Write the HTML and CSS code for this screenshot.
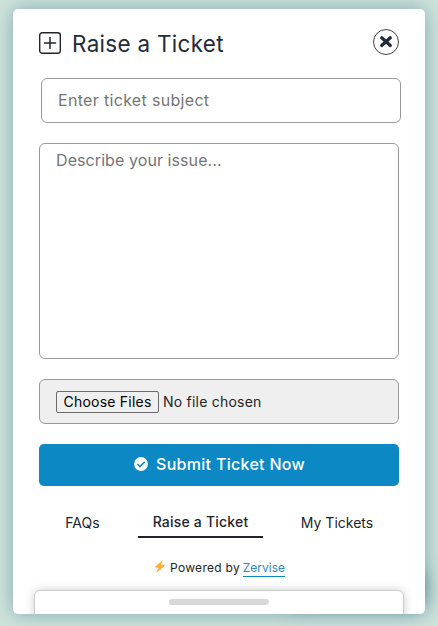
FILE: index.html
```html
<!DOCTYPE html>
<html lang="en">
<head>
<meta charset="utf-8">
<title>Raise a Ticket</title>
<link rel="stylesheet" href="styles.css">
</head>
<body>
<div class="launcher-shadow"></div>
<main class="card">
  <header class="header">
    <svg class="add-icon" viewBox="0 0 22 22" fill="none" stroke="#212529">
      <rect x=".7" y=".7" width="20.6" height="20.6" rx="2.6" stroke-width="1.4"/>
      <path d="M11 5.5v11M5.5 11h11" stroke-width="1.5" stroke-linecap="round"/>
    </svg>
    <h1 class="title">Raise a Ticket</h1>
    <button class="close" aria-label="Close">
      <svg viewBox="0 0 26 26" fill="none">
        <circle cx="13" cy="13" r="12.5" stroke="#444"/>
        <path d="M8.7 8.7l8.6 7.8M17.3 8.7l-8.6 7.8" stroke="#212b3a" stroke-width="3.2" stroke-linecap="round"/>
      </svg>
    </button>
  </header>
  <form class="form">
    <input class="field subject" type="text" placeholder="Enter ticket subject">
    <textarea class="field issue" placeholder="Describe your issue..."></textarea>
    <div class="field files">
      <button class="choose" type="button">Choose Files</button>
      <span class="chosen">No file chosen</span>
    </div>
    <button class="submit" type="button">
      <svg class="check" viewBox="0 0 14 14" fill="none">
        <circle cx="7" cy="7" r="6.9" fill="#fff"/>
        <path d="M3.4 7l2.6 2.6 4.8-4.8" stroke="#0c89c4" stroke-width="1.5"/>
      </svg>
      <span class="submit-label">Submit Ticket Now</span>
    </button>
  </form>
  <nav class="tabs">
    <a class="tab faqs">FAQs</a>
    <a class="tab active">Raise a Ticket</a>
    <a class="tab mine">My Tickets</a>
  </nav>
  <footer class="powered">
    <svg class="bolt" viewBox="0 0 12 13"><path d="M9 0L.4 7.2l4.2.9L2.2 12.8 11.4 5.4 7 4.6z" fill="#ffac33"/></svg>
    <span class="by">Powered by</span>
    <a class="brand">Zervise</a>
  </footer>
  <section class="sheet"><div class="handle"></div></section>
</main>
</body>
</html>
```
FILE: styles.css
```css
* { box-sizing: border-box; }
body {
  position: relative;
  margin: 0;
  width: 438px;
  height: 626px;
  padding: 9px 13px 12px;
  overflow: hidden;
  background: #cfe3dc;
  font-family: Inter, "Open Sans", sans-serif;
  color: #212529;
}
button, input, textarea { font: inherit; color: inherit; }
/* Shadow of the launcher button hidden behind the card's corner */
.launcher-shadow {
  position: absolute;
  right: 14px;
  bottom: 20px;
  width: 140px;
  height: 38px;
  border-radius: 14px;
  box-shadow: 0 0 18px rgba(55, 110, 128, .75);
}
.card {
  position: relative;
  height: 605px;
  display: flex;
  flex-direction: column;
  overflow: hidden;
  border-radius: 5px;
  background: #fff;
  box-shadow: 0 0 20px rgba(69, 123, 137, .55);
}
.header {
  flex: none;
  display: flex;
  align-items: center;
  height: 69px;
  padding: 0 26px 1px;
}
.add-icon { width: 22px; height: 22px; flex: none; }
.title {
  margin: 0 0 0 11px;
  font-size: 22.4px;
  line-height: 33px;
  font-weight: 400;
  letter-spacing: .34px;
  white-space: nowrap;
  color: #212b3a;
}
.close {
  width: 26px;
  height: 26px;
  margin: 0 0 2px auto;
  padding: 0;
  border: 0;
  background: none;
}
.close svg { display: block; }
.form {
  flex: none;
  display: flex;
  flex-direction: column;
  gap: 20px;
  padding: 0 26px;
}
.field {
  width: 360px;
  border: 1px solid #999;
  border-radius: 6px;
  background: #fff;
  font-size: 16px;
}
.field::placeholder { color: #757575; opacity: 1; }
.subject { height: 45px; margin-left: 2px; padding: 0 16px 2px; letter-spacing: .32px; }
.issue {
  display: block;
  height: 216px;
  padding: 4px 16px;
  line-height: 24px;
  letter-spacing: .08px;
  resize: none;
}
.files {
  display: flex;
  align-items: center;
  height: 45px;
  padding: 0 16px;
  background: #efefef;
}
.choose {
  width: 103px;
  height: 22px;
  padding: 0;
  border: 1px solid #6b6b6b;
  border-radius: 2px;
  background: #efefef;
  color: #000;
  font-size: 14px;
  line-height: 20px;
  letter-spacing: .22px;
}
.chosen { margin-left: 4px; font-size: 14px; letter-spacing: .22px; }
.submit {
  display: flex;
  align-items: center;
  height: 42px;
  padding: 0 0 0 95px;
  border: 0;
  border-radius: 5px;
  background: #0c89c4;
  color: #fff;
  font-weight: 550;
  font-size: 16px;
  letter-spacing: .3px;
}
.check { width: 14px; height: 14px; margin: 0 8px 3px 0; flex: none; }
.submit-label { white-space: nowrap; padding-bottom: 2px; }
.tabs {
  flex: none;
  display: flex;
  height: 52px;
  padding: 22px 0 0 26px;
  font-size: 14px;
  line-height: 30px;
  white-space: nowrap;
}
.tab { text-align: center; }
.faqs { width: 87px; }
.active {
  width: 125px;
  height: 30px;
  margin-left: 12px;
  line-height: 28px;
  border-bottom: 2px solid #212529;
  font-weight: 500;
  letter-spacing: .2px;
}
.mine { width: 148px; }
.powered {
  flex: none;
  display: flex;
  align-items: flex-start;
  height: 52px;
  padding: 21px 0 0 141px;
  font-size: 12px;
  line-height: 18px;
  white-space: nowrap;
}
.bolt { width: 12px; height: 13px; margin: 1px 4px 0 0; flex: none; }
.by { letter-spacing: .3px; }
.brand {
  height: 18px;
  margin-left: auto;
  margin-right: 140px;
  border-bottom: 1px solid #0c89c4;
  color: #3288c5;
}
.sheet {
  flex: none;
  width: 370px;
  height: 40px;
  margin: 0 0 0 21px;
  padding-top: 8px;
  border: 1px solid #ccc;
  border-radius: 6px;
  background: #fff;
  box-shadow: 0 0 10px rgba(0, 0, 0, .2);
}
.handle { width: 100px; height: 6px; margin: 0 auto; border-radius: 3px; background: #d8d8d8; }
```
